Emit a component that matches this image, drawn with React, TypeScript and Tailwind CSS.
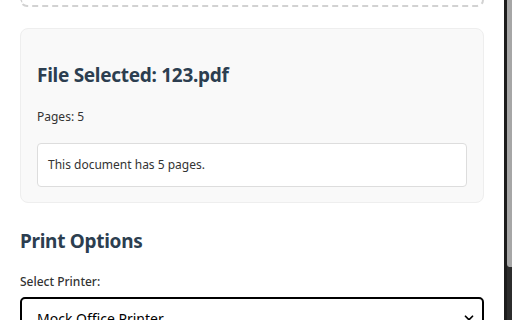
import { ChevronDown } from 'lucide-react';

export default function App() {
  return (
    <div className="flex h-[320px] w-[512px] overflow-hidden bg-white font-['Noto_Sans',sans-serif] text-[#333]">
      <main className="flex-1 px-5">
        {/* upload drop zone, scrolled mostly out of view */}
        <div className="h-[7px] rounded-b-lg border-2 border-t-0 border-dashed border-[#d2d2d2]" />

        <section className="mt-[21px] rounded-lg border border-[#eeeeee] bg-[#f9f9f9] px-4 pt-4 pb-[15px]">
          <h3 className="mt-[18px] text-[19px] font-bold leading-[24px] tracking-[-0.015em] text-[#2c3e50]">
            File Selected: 123.pdf
          </h3>
          <p className="mt-[21px] text-[12px] leading-[18px]">Pages: 5</p>
          <div className="mt-[17px] rounded-[4px] border border-[#dddddd] bg-white px-[10px] py-3 text-[12px] leading-[18px]">
            This document has 5 pages.
          </div>
        </section>

        <h2 className="mt-[26px] text-[19px] font-bold leading-[24px] tracking-[-0.015em] text-[#2c3e50]">
          Print Options
        </h2>
        <label className="mt-5 block text-[12px] font-medium leading-[18px]">Select Printer:</label>
        <div className="mt-[6px] flex h-[42px] items-center justify-between rounded-[5px] border-2 border-black pl-[15px] pr-[6px] text-[14px] text-black">
          <span>Mock Office Printer</span>
          <ChevronDown size={14} strokeWidth={3} />
        </div>
      </main>

      {/* window scrollbar */}
      <div className="flex w-[8px]">
        <div className="w-[3px] bg-[#1c1c1c]" />
        <div className="flex flex-1 flex-col bg-[#2c2c2c]">
          <div className="h-[267px] rounded-bl-[3px] bg-[#a6a6a6]" />
        </div>
      </div>
    </div>
  );
}
